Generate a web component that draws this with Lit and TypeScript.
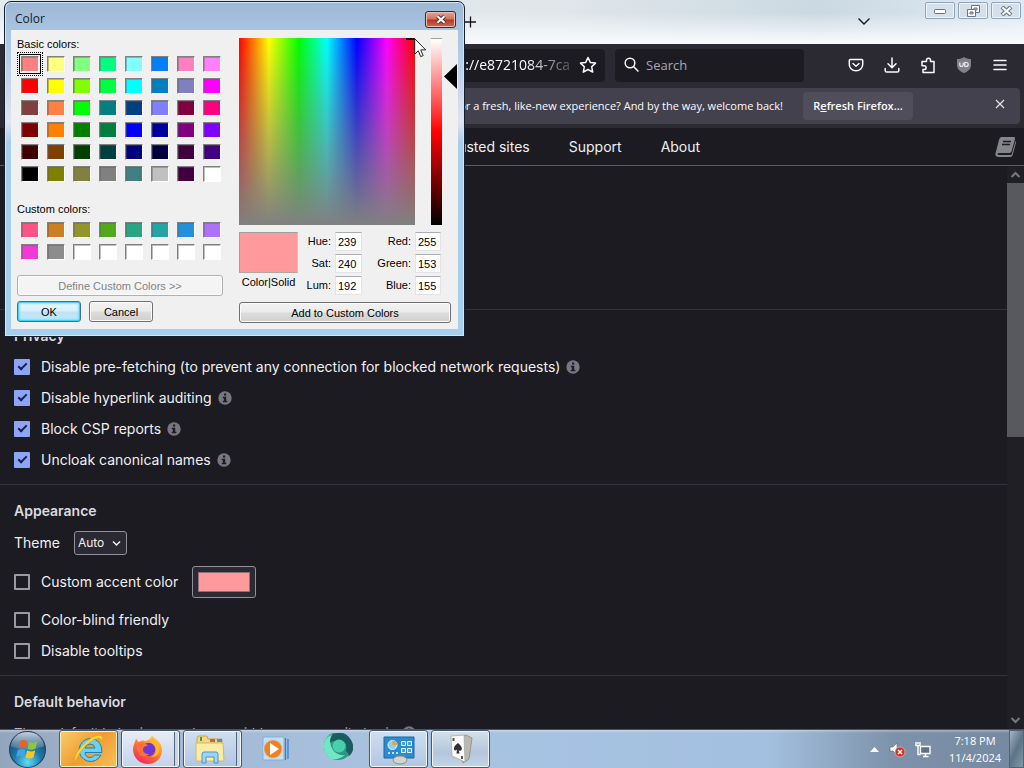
import { LitElement, html, css, svg } from "lit";
import { customElement } from "lit/decorators.js";
import { styleMap } from "lit/directives/style-map.js";

const BASIC = [
  "#ff8080", "#ffff80", "#80ff80", "#00ff80", "#80ffff", "#0080ff", "#ff80c0", "#ff80ff",
  "#ff0000", "#ffff00", "#80ff00", "#00ff40", "#00ffff", "#0080c0", "#8080c0", "#ff00ff",
  "#804040", "#ff8040", "#00ff00", "#008080", "#004080", "#8080ff", "#800040", "#ff0080",
  "#800000", "#ff8000", "#008000", "#008040", "#0000ff", "#0000a0", "#800080", "#8000ff",
  "#400000", "#804000", "#004000", "#004040", "#000080", "#000040", "#400040", "#400080",
  "#000000", "#808000", "#808040", "#808080", "#408080", "#c0c0c0", "#400040", "#ffffff",
];
const CUSTOM = [
  "#fc5484", "#cc7f22", "#94942c", "#54a81c", "#2ca484", "#24a4a4", "#2490dc", "#ac74f4",
  "#f438d4", "#8c8c8c", "#ffffff", "#ffffff", "#ffffff", "#ffffff", "#ffffff", "#ffffff",
];

@customElement("color-dialog")
export class ColorDialog extends LitElement {
  static styles = css`
    :host { display: block; font: 11px/14px "Liberation Sans", Arial, sans-serif; color: #000; }
    * { box-sizing: border-box; }
    button, input { font: inherit; color: inherit; margin: 0; padding: 0; }
    .frame {
      border: 1px solid #15202c; border-radius: 7px 7px 0 0; padding: 0 6px 7px;
      background: linear-gradient(#9db8d4 0, #a9c6e4 34px, #c3d5ec 80px, #dfe4f4 120px, #a9cdeb 140px, #a6d0ee);
      box-shadow: inset 0 0 0 1px #d3e6f7;
    }
    .title { display: flex; align-items: center; justify-content: space-between; height: 28px; padding: 6px 2px 0 4px; }
    .title span { font: 12px/16px "Open Sans", "Noto Sans", sans-serif; color: #111c2c; }
    .close {
      display: grid; place-items: center; width: 31px; height: 17px; border: 1px solid #5a1a1a; border-radius: 3px;
      background: linear-gradient(#e0a59a, #cf7160 48%, #b5371f 52%, #d0695a); box-shadow: inset 0 0 0 1px #edc0b6;
    }
    .body { display: flex; gap: 16px; background: #f0f0f0; padding: 7px 0 6px 6px; }
    .left { display: flex; flex-direction: column; width: 206px; }
    .right { flex: 1; display: flex; flex-direction: column; padding-top: 1px; }
    .swatches { display: grid; grid-template-columns: repeat(8, 18px); gap: 6px 8px; padding: 5px 4px 0; }
    .sw {
      height: 16px; border: 1px solid; border-color: #808080 #fff #fff #808080; box-shadow: inset 1px 1px 0 #5c5c5c66;
    }
    .sw.on { outline: 1px solid #000; outline-offset: 1px; position: relative; }
    .sw.on::after { content: ""; position: absolute; inset: -5px; border: 1px dotted #000; }
    .custom { margin-top: 20px; }
    .custom + .swatches { padding-top: 6px; }
    .btn {
      height: 21px; border: 1px solid #707070; border-radius: 3px; line-height: 14px;
      background: linear-gradient(#f2f2f2, #ebebeb 48%, #dddddd 52%, #cfcfcf); box-shadow: inset 0 0 0 1px #fcfcfc;
    }
    .btn:disabled { border-color: #adb2b5; background: #f4f4f4; color: #838383; }
    .ok { border-color: #2c7a9c; box-shadow: inset 0 0 0 1px #45d0f3, inset 0 0 3px 1px #45d0f3; background: linear-gradient(#eef7fc, #d9effb 48%, #bfe3f5 52%, #c6e8f8); }
    .define { margin-top: 15px; }
    .pair { display: flex; gap: 8px; margin-top: 5px; }
    .pair .btn { width: 64px; }
    .pick { display: flex; }
    .spectrum {
      width: 176px; height: 187px; position: relative;
      background: linear-gradient(#80808000, #808080), linear-gradient(to right, #f00, #ff0 17%, #0f0 34%, #0ff 50%, #00f 67%, #f0f 84%, #f00);
    }
    .spectrum::after { content: ""; position: absolute; right: 0; top: 0; width: 8px; height: 9px; border-top: 2px solid #000; border-right: 1px solid #000; }
    .lum { width: 11px; margin-left: 16px; background: linear-gradient(#fff, #f00 50%, #000); border-top: 1px solid #a0a0a0; }
    .tri { margin: 26px 0 0 2px; align-self: flex-start; }
    .vals { display: flex; padding: 7px 0; }
    .preview { width: 59px; text-align: center; white-space: nowrap; }
    .chip { height: 41px; background: #ff999b; border: 1px solid; border-color: #a0a0a0 #f4b4b4 #b4a4a4 #a0a0a0; margin-bottom: 2px; }
    .nums { display: grid; grid-template-columns: 33px 27px 45px 26px; gap: 3px 4px; }
    .nums label { text-align: right; line-height: 19px; }
    .nums input { width: 100%; height: 19px; border: 1px solid #e3e3e3; border-top-color: #abadb3; background: #fff; padding: 0 0 0 2px; outline: 0; }
    .add { width: 212px; }
  `;
  swatch = (c: string, i: number, on: boolean) => html`<button class="sw ${on ? "on" : ""}" aria-label=${`Color ${i + 1}`} style=${styleMap({ backgroundColor: c })}></button>`;
  num = (id: string, v: string) => html`<label for=${id}>${id}:</label><input id=${id} .value=${v} />`;
  render() {
    return html`<div class="frame" role="dialog" aria-label="Color">
      <div class="title"><span>Color</span>
        <button class="close" aria-label="Close"><svg width="12" height="9" viewBox="0 0 12 9"><path d="M2.5 1.3l7 6.4M9.5 1.3l-7 6.4" stroke="#5b2720" stroke-width="4"/><path d="M2.5 1.3l7 6.4M9.5 1.3l-7 6.4" stroke="#fff" stroke-width="2.2"/></svg></button>
      </div>
      <div class="body">
        <div class="left">
          <div>Basic colors:</div>
          <div class="swatches">${BASIC.map((c, i) => this.swatch(c, i, i === 0))}</div>
          <div class="custom">Custom colors:</div>
          <div class="swatches">${CUSTOM.map((c, i) => this.swatch(c, i, false))}</div>
          <button class="btn define" disabled>Define Custom Colors &gt;&gt;</button>
          <div class="pair"><button class="btn ok">OK</button><button class="btn">Cancel</button></div>
        </div>
        <div class="right">
          <div class="pick"><div class="spectrum"></div><div class="lum"></div>
            <svg class="tri" width="13" height="25" viewBox="0 0 13 25"><path d="M0 12.5L13 0v25z"/></svg></div>
          <div class="vals">
            <div class="preview"><div class="chip"></div>Color|Solid</div>
            <div class="nums">
              ${this.num("Hue", "239")}${this.num("Red", "255")}${this.num("Sat", "240")}${this.num("Green", "153")}${this.num("Lum", "192")}${this.num("Blue", "155")}
            </div>
          </div>
          <button class="btn add">Add to Custom Colors</button>
        </div>
      </div>
    </div>`;
  }
}

@customElement("browser-chrome")
export class BrowserChrome extends LitElement {
  static styles = css`
    :host { display: block; font: 12px/16px "Open Sans", "Noto Sans", sans-serif; color: #fbfbfe; background: #2b2a33; }
    * { box-sizing: border-box; }
    button { font: inherit; color: inherit; margin: 0; padding: 0; border: 0; background: none; }
    svg { display: block; fill: none; }
    .tabs {
      display: flex; align-items: flex-start; height: 44px; color: #15141a; padding: 0 3px 0 461px;
      background: linear-gradient(#ffffff00 30%, #f7fafc 95%), linear-gradient(to right, #e4ecf0, #e0e6ea 55%, #cbd9e2 80%, #dfeaf4);
    }
    .plus { padding: 16px 4px; }
    .chev { margin: 17px 54px 0 auto; }
    .win { display: flex; gap: 3px; padding-top: 2px; }
    .win button { width: 30px; height: 17px; border: 1px solid #93a4b8; border-radius: 2px; display: grid; place-items: center; background: #d5e0ea; box-shadow: inset 0 0 0 1px #eef3f8; }
    .tools { display: flex; align-items: center; height: 42px; padding: 0 16px 0 124px; }
    .url, .search { display: flex; align-items: center; height: 33px; background: #1c1b22; border-radius: 4px; }
    .url { flex: 1; padding-right: 8px; margin-right: 10px; gap: 8px; }
    .ident { padding: 0 8px; width: 237px; text-align: right; font-size: 13px; white-space: nowrap; }
    input { font: 14px/20px "Open Sans", "Noto Sans", sans-serif; color: #fbfbfe; border: 0; padding: 0; background: none; min-width: 0; outline: 0; }
    .url input { flex: 1; -webkit-mask-image: linear-gradient(to right, #000 78%, #0003); }
    .search { width: 189px; padding: 0 9px; gap: 6px; margin-right: 44px; }
    .search input { flex: 1; font-size: 13px; }
    .search input::placeholder { color: #a9a8b1; opacity: 1; }
    .icons { display: flex; gap: 20px; }
    .notice { display: flex; align-items: center; margin: 2px 4px 4px; height: 36px; border-radius: 4px; background: #42414d; padding-right: 15px; }
    .msg { flex: 1; text-align: right; white-space: nowrap; overflow: hidden; font-size: 11px; padding-right: 20px; }
    .refresh { width: 110px; height: 28px; background: #4f4e5a; border-radius: 4px; font-size: 11px; font-weight: 600; }
    .x { margin-left: 82px; padding-bottom: 4px; }
  `;
  render() {
    return html`
      <div class="tabs">
        <button class="plus" aria-label="New tab"><svg width="12" height="12" stroke="#15141a" stroke-width="1.3"><path d="M0 6h11M5.5 .5v11"/></svg></button>
        <button class="chev" aria-label="List all tabs"><svg width="14" height="10" stroke="#15141a" stroke-width="1.4"><path d="M1.5 1.5L7 7l5.5-5.5"/></svg></button>
        <div class="win">
          <button aria-label="Minimize"><svg width="12" height="8"><rect x=".5" y="2.5" width="11" height="4" rx="1" fill="#fff" stroke="#66758a"/></svg></button>
          <button aria-label="Restore"><svg width="13" height="12" stroke="#66758a"><path fill="#fff" fill-rule="evenodd" d="M4.5 .5h8v7h-8zM7 3h3v2H7z"/><path fill="#fff" fill-rule="evenodd" d="M.5 4.5h8v7h-8zM3 7h3v2H3z"/></svg></button>
          <button aria-label="Close"><svg width="13" height="10"><path d="M2 1l9 8M11 1L2 9" stroke="#66758a" stroke-width="4.2"/><path d="M2.5 1.5l8 7M10.5 1.5l-8 7" stroke="#fff" stroke-width="2.2"/></svg></button>
        </div>
      </div>
      <div class="tools">
        <div class="url">
          <span class="ident">Extension</span>
          <input aria-label="Address" .value=${"moz-extension://e8721084-7cac-4"} />
          <button aria-label="Bookmark"><svg width="18" height="18" stroke="#fbfbfe" stroke-width="1.5" stroke-linejoin="round"><path d="M9 1.500l2.300 4.900 5.200.700-3.800 3.700 1 5.300L9 13.500l-4.700 2.600 1-5.300L1.500 7.100l5.200-.700z"/></svg></button>
        </div>
        <div class="search">
          <svg width="16" height="16" stroke="#fbfbfe" stroke-width="1.5"><circle cx="6" cy="6" r="4.8"/><path d="M9.5 9.5l5 5"/></svg>
          <input aria-label="Search" placeholder="Search" />
        </div>
        <div class="icons">
          <button aria-label="Pocket"><svg width="16" height="16" stroke="#fbfbfe" stroke-width="1.5" stroke-linecap="round" stroke-linejoin="round"><path d="M2.300 2.500h11.400q1 0 1 1v4a6.700 6.300 0 0 1-13.400 0v-4q0-1 1-1z"/><path d="M5 6.500l3 2.800 3-2.800"/></svg></button>
          <button aria-label="Downloads"><svg width="16" height="16" stroke="#fbfbfe" stroke-width="1.5" stroke-linecap="round" stroke-linejoin="round"><path d="M8 1v9.500M4 6.800l4 4 4-4M1.200 11.500v2q0 1.500 1.500 1.500h10.600q1.500 0 1.500-1.500v-2"/></svg></button>
          <button aria-label="Extensions"><svg width="16" height="17" stroke="#fbfbfe" stroke-width="1.5" stroke-linejoin="round"><path d="M2 7V4.500h4.500V3.300a2 2 0 0 1 4 0v1.200H14V15.500H3V12.500h1.200a1.800 1.800 0 0 0 0-3.700H2z"/></svg></button>
          <button aria-label="uBlock Origin"><svg width="16" height="16"><path d="M8 0C6 1.500 3.500 2 1 2v6c0 4 3 6.500 7 8 4-1.500 7-4 7-8V2C12.500 2 10 1.500 8 0z" fill="#808088"/><path d="M3.800 5.500v2.300a1.700 1.700 0 0 0 3.400 0V5.500" stroke="#eee" stroke-width="1.2"/><path d="M8.800 5.500h1.400q2 0 2 2t-2 2H8.800z" stroke="#eee" stroke-width="1.2"/></svg></button>
          <button aria-label="Menu"><svg width="16" height="16" stroke="#fbfbfe" stroke-width="1.5" stroke-linecap="round"><path d="M2 3.500h12M2 8h12M2 12.500h12"/></svg></button>
        </div>
      </div>
      <div class="notice">
        <span class="msg">Do you want to clean it up for a fresh, like-new experience? And by the way, welcome back!</span>
        <button class="refresh">R<u>e</u>fresh Firefox...</button>
        <button class="x" aria-label="Dismiss"><svg width="10" height="10" stroke="#e4e4ea" stroke-width="1.2"><path d="M1 1l8 8M9 1L1 9"/></svg></button>
      </div>`;
  }
}

@customElement("settings-page")
export class SettingsPage extends LitElement {
  static styles = css`
    :host { display: flex; flex-direction: column; min-height: 0; font: 14px/20px Inter, sans-serif; color: #f0f0f4; background: #1b1b21; }
    * { box-sizing: border-box; }
    svg { display: block; }
    nav { display: flex; align-items: center; height: 38px; border-bottom: 1px solid #5b5b66; padding: 0 8px 0 34px; flex: none; }
    nav a { color: inherit; text-decoration: none; padding: 0 20px 0 19px; white-space: nowrap; }
    nav .book { margin-left: auto; padding: 0; }
    .view { flex: 1; display: flex; min-height: 0; }
    main { flex: 1; overflow: hidden; }
    section { padding: 10px 14px 9px; border-bottom: 1px solid #33333b; }
    h2 { font-size: 14px; font-weight: 600; line-height: 31px; margin: 0; color: #dadae0; }
    .row { display: flex; align-items: center; height: 31px; }
    .row label { padding-left: 11px; white-space: nowrap; }
    .row.theme { height: 34px; }
    .theme label { padding: 0 14px 0 0; }
    .row.accent { height: 44px; }
    input[type="checkbox"] { appearance: none; width: 16px; height: 16px; margin: 0; border: 2px solid #9a9aa2; border-radius: 1px; flex: none; display: grid; place-items: center; }
    input[type="checkbox"]:checked { background: #8ea4f4; border-color: #8ea4f4; }
    input[type="checkbox"]:checked::before { content: ""; width: 9px; height: 5px; box-sizing: border-box; border: solid #15204c; border-width: 0 0 2px 2px; transform: translateY(-1px) rotate(-45deg); }
    .info { margin-left: 6px; }
    .pickbox { display: grid; }
    select { appearance: none; grid-area: 1 / 1; font: 12px/20px Inter, sans-serif; color: #f0f0f4; background: #2b2a33; border: 1px solid #8f8f9d; border-radius: 3px; width: 53px; height: 24px; padding: 0 3px; }
    .pickbox svg { grid-area: 1 / 1; place-self: center end; margin-right: 6px; pointer-events: none; }
    input[type="color"] { appearance: none; width: 64px; height: 32px; margin-left: 14px; border: 1px solid #8f8f9d; border-radius: 3px; background: #2b2a33; padding: 5px; }
    input[type="color"]::-webkit-color-swatch-wrapper { padding: 0; }
    input[type="color"]::-webkit-color-swatch { border: 1px solid #8f7078; border-radius: 0; }
    .note { color: #b8b8c0; font-size: 13px; }
    .scroll { width: 17px; display: flex; flex-direction: column; align-items: center; background: #1f1f25; padding: 5px 0; }
    .thumb { width: 100%; height: 46%; margin: 5px 0 auto; background: #58585f; }
  `;
  info = () => html`<svg class="info" width="14" height="14" viewBox="0 0 14 14"><circle cx="7" cy="7" r="6.7" fill="#77777f"/><path fill="#1b1b21" d="M6 2.500h2.200v2H6zM4.800 5.700h3.400v4h1.100v1.500H4.800V9.700h1.100V7.200H4.800z"/></svg>`;
  check = (id: string, text: string, on: boolean, info = false) => html`<div class="row"><input type="checkbox" id=${id} .checked=${on} /><label for=${id}>${text}</label>${info ? this.info() : ""}</div>`;
  render() {
    return html`
      <nav>
        ${["Settings", "Filter lists", "My filters", "My rules", "Trusted sites", "Support", "About"].map((t) => html`<a href="#">${t}</a>`)}
        <a class="book" href="#" aria-label="Documentation"><svg width="21" height="20" viewBox="0 0 21 20"><path fill="#85858c" d="M6.500 0h12q2 0 1.500 2l-3.300 12q-.5 2-2.500 2H4q-1.500 0-1.500 1t1.500 1h11.500q1 0 1.500-1.500L20.500 4q.8.8.3 2.300L17.800 17.500Q17.200 20 15 20H3.500Q0 20 .5 16.500L4 3Q4.700 0 6.500 0z"/><path d="M8 4.500h8M7 7.500h8" stroke="#1b1b21" stroke-width="1.4"/></svg></a>
      </nav>
      <div class="view">
        <main>
          <section>
            ${this.check("icon", "Show the number of blocked requests on the icon", true)}
            ${this.check("menu", "Make use of context menu where appropriate", true)}
            ${this.check("cloud", "Enable cloud storage support", false)}
            ${this.check("adv", "I am an advanced user", false)}
          </section>
          <section>
            <h2>Privacy</h2>
            ${this.check("pre", "Disable pre-fetching (to prevent any connection for blocked network requests)", true, true)}
            ${this.check("aud", "Disable hyperlink auditing", true, true)}
            ${this.check("csp", "Block CSP reports", true, true)}
            ${this.check("names", "Uncloak canonical names", true, true)}
          </section>
          <section>
            <h2>Appearance</h2>
            <div class="row theme"><label for="theme">Theme</label>
              <span class="pickbox"><select id="theme"><option>Auto</option><option>Light</option><option>Dark</option></select>
                <svg width="9" height="7" fill="none" stroke="#f0f0f4" stroke-width="1.5"><path d="M1 1.500l3.500 3.500L8 1.500"/></svg></span></div>
            <div class="row accent"><input type="checkbox" id="accent" /><label for="accent">Custom accent color</label><input type="color" aria-label="Accent color" value="#ff999b" /></div>
            ${this.check("blind", "Color-blind friendly", false)}
            ${this.check("tips", "Disable tooltips", false)}
          </section>
          <section>
            <h2>Default behavior</h2>
            <div class="row note">These default behaviors can be overridden on a per-site basis${this.info()}</div>
          </section>
        </main>
        <div class="scroll">
          <svg width="11" height="7" fill="none" stroke="#77777f" stroke-width="2"><path d="M1.500 6l4-4 4 4"/></svg>
          <div class="thumb"></div>
          <svg width="11" height="7" fill="none" stroke="#77777f" stroke-width="2"><path d="M1.500 1l4 4 4-4"/></svg>
        </div>
      </div>`;
  }
}

const orb = svg`<defs><radialGradient id="o" cx=".5" cy=".85" r=".85"><stop offset="0" stop-color="#5fe0f8"/><stop offset=".45" stop-color="#1f78a8"/><stop offset="1" stop-color="#1b3c66"/></radialGradient><linearGradient id="g" x2="0" y2="1"><stop stop-color="#fff" stop-opacity=".75"/><stop offset="1" stop-color="#fff" stop-opacity=".1"/></linearGradient></defs>
  <circle cx="18" cy="18" r="17.5" fill="url(#o)" stroke="#24405c"/><path d="M2 15a16 14 0 0 1 32 0q-16 6-32 0z" fill="url(#g)"/>
  <path fill="#e8622c" d="M10.500 10q4-2.500 7.500 0l-1.500 7q-3.500-2-7.500 0z"/><path fill="#8cc63f" d="M19.500 10.500q4 2 8-.5l-1.800 7.200q-3.700 2-7.700.3z"/><path fill="#3fa4e8" d="M8.500 18.500q4-2.200 7.600 0l-1.600 7q-3.500-2.500-7.500-.5z"/><path fill="#fcc820" d="M17.700 19q4 2 7.800-.2l-1.700 7q-4 2.200-7.800-.2z"/>`;
const ie = svg`<path d="M17 5.500A11.500 11.500 0 1 0 28 22h-6.500q-1.500 2.500-4.500 2.500-4.500 0-5-5h17Q29 6 17 5.500zm-5 9.500q1-4 5-4t5 4z" fill="#6cd0f6" stroke="#1b82b8"/><path d="M4 30Q-2 25 9 13T28 2.500q3 2-1 8 2-6-2-5.500Q16 7.500 8.500 17.500T4 30z" fill="#fcd93c" stroke="#e0a318" stroke-width=".6"/>`;
const fox = svg`<defs><linearGradient id="f" x1=".9" y1="0" x2=".3" y2="1"><stop stop-color="#ffe040"/><stop offset=".45" stop-color="#ff8c28"/><stop offset="1" stop-color="#f0285c"/></linearGradient></defs><path d="M20 2c1 4 10 5 10 15 0 8-6 14-14 14S1 25 1 16.500C1 12 3 10 4 5.500c1 2 2 3 3 3.500 3-2 5-1.500 7-1 2-1 5-2 6-6z" fill="url(#f)"/><circle cx="16.5" cy="16.5" r="6.8" fill="#7038d0"/><path d="M6 10c4-2 8 0 10 3-3-.5-5 1-5 3.500 0 3 3 5 6 4.500-3 3.500-9 3-11-1.500S5 13 6 10z" fill="#ff7139"/><path d="M18 9c4 1 6 4 6 8s-3 6-5 7c6 0 9-4 8-10S21 7 18 9z" fill="#ffb52e"/>`;
const folder = svg`<path d="M3 5l1-2h9l1 3h14v21H3z" fill="#f0d884" stroke="#c8a544"/><path d="M6 4h2v4H6z" fill="#4c9c3c"/><path d="M16 6h5v3h-5z" fill="#c86444"/><path d="M23 6h5v3h-5z" fill="#548cc8"/><path d="M2 10h27l1 18H2z" fill="#fbeca8" stroke="#d8b85c"/><path d="M8 30v-9q0-2 2-2h12q2 0 2 2v9h-4v-6h-8v6z" fill="#9cd4f4" stroke="#4c94c8"/>`;
const media = svg`<path d="M4 4h21v23H4z" fill="#c4e0f4" stroke="#7cb0dc"/><path d="M26.500 5v22M29 6v20" stroke="#3c84c8" stroke-width="1.3"/><circle cx="14" cy="16" r="9.5" fill="#f08020" stroke="#c8d4e0" stroke-width="1.5"/><path d="M11 10l9 6-9 6z" fill="#fff"/>`;
const edge = svg`<circle cx="17" cy="13" r="14" fill="#2c9884"/><path d="M4 19Q0 6 11 1.500 7 10 12 17q4 6 12 5Q11 32 4 19z" fill="#70e8c4"/><path d="M12 1q12-4 18 6t-3 17q2-3-2-6 2-10-6-10-8-1-10 2 0-6 3-9z" fill="#1c5c5c"/><circle cx="18" cy="13" r="6.5" fill="#48d0ac"/>`;
const panel = svg`<path d="M1 4h30v21H1z" fill="#2c8cd0" stroke="#1868a8"/><circle cx="9.5" cy="12" r="4.5" fill="#8cd0f4" stroke="#e8f4fc"/><path d="M9.500 12V7.500a4.500 4.500 0 0 1 4.500 4.500z" fill="#f0a030"/><path d="M18.500 8.500h4v4h-4zM24.500 8.500h4v4h-4zM18.500 15.500h4v4h-4zM24.500 15.500h4v4h-4z" fill="#48a4e0" stroke="#e8f4fc"/><path d="M5 20h10" stroke="#bce0f8" stroke-width="2" stroke-dasharray="2"/><ellipse cx="17" cy="27" rx="7" ry="4" fill="#d4d4cc" stroke="#8c8c84"/>`;
const cards = svg`<path d="M10 4l11-2 6 3-3 21-6 4z" fill="#b8b8b4" stroke="#84847c" stroke-width=".7"/><path d="M6 3l13-1 1 27-13-6z" fill="#fafaf8" stroke="#a4a49c" stroke-width=".7"/><path d="M13 10q6 5 3 7.500-2 1-2.500-1l1 4h-3l.5-4q-2 2-3 0-1-3 4-6.500z" fill="#303030"/><path d="M7.500 5h2v3h-2zM16 23h2v3h-2z" fill="#555"/>`;

@customElement("task-bar")
export class TaskBar extends LitElement {
  static styles = css`
    :host {
      display: flex; align-items: stretch; height: 39px; font: 11px/17px "Open Sans", "Noto Sans", sans-serif; color: #fff; padding-left: 6px;
      background: linear-gradient(#ffffff55, #ffffff00 3px), linear-gradient(to right, #94a6be, #a3b6cf 12%, #a8c3e2 40%, #a4c0e0 75%, #7e93ab 87%, #74899f);
      border-top: 1px solid #40566e; box-sizing: border-box;
    }
    * { box-sizing: border-box; }
    button { padding: 0; margin: 0; border: 0; background: none; display: grid; place-items: center; }
    svg { display: block; }
    .start { width: 42px; margin-right: 11px; }
    .apps { display: flex; gap: 3px; }
    .app { width: 59px; border-radius: 3px; }
    .open { border: 1px solid #44586e; box-shadow: inset 0 0 0 1px #f0f6fc; background: linear-gradient(#d4e0ec, #b4c6dc 60%, #c4d4e6); }
    .hot { background: linear-gradient(135deg, #f8d068, #f09c34 50%, #f8c058); box-shadow: inset 0 0 0 1px #fdf0c0; }
    .light { background: linear-gradient(#e8ecf6, #c4d2ea); }
    .pale { background: linear-gradient(#d0dff0, #b0c6e2); }
    .many { padding-right: 6px; box-shadow: inset 0 0 0 1px #f0f6fc, inset -4px 0 0 #c8d6e6, inset -5px 0 0 #54687e; }
    .tray { margin-left: auto; display: flex; align-items: center; gap: 9px; }
    .clock { width: 68px; text-align: center; white-space: nowrap; }
    .desk { width: 15px; border: 1px solid #50647a; background: linear-gradient(115deg, #a4b4c4, #5c7488 50%, #8498a8); }
  `;
  app = (name: string, art: unknown, cls = "") => html`<button class="app ${cls}" aria-label=${name}><svg width="32" height="32" viewBox="0 0 32 32" fill="none">${art}</svg></button>`;
  render() {
    return html`
      <button class="start" aria-label="Start"><svg width="37" height="37" viewBox="0 0 36 36">${orb}</svg></button>
      <div class="apps">
        ${this.app("Internet Explorer", ie, "open hot")}${this.app("Firefox", fox, "open light many")}${this.app("Explorer", folder, "open pale many")}${this.app("Media Player", media)}${this.app("Edge", edge)}${this.app("Control Panel", panel, "open pale")}${this.app("Solitaire", cards, "open")}
      </div>
      <div class="tray">
        <svg width="9" height="5"><path d="M4.500 0L9 5H0z" fill="#fff"/></svg>
        <svg width="18" height="17" viewBox="0 0 18 17"><path d="M2 6h3l4-4v12l-4-4H2z" fill="#fff" stroke="#56687c" stroke-width=".6"/><circle cx="12" cy="11" r="5" fill="#d03428" stroke="#f4c8c0" stroke-width=".6"/><path d="M10 9l4 4M14 9l-4 4" stroke="#fff" stroke-width="1.5"/></svg>
        <svg width="17" height="17" viewBox="0 0 17 17" fill="none" stroke="#fff" stroke-width="1.4"><path fill="#5c7088" d="M5.500 5.500h9.500v7H5.500z"/><path d="M8 15.500h5.500M10.500 12.500v3M1 1v3.500h4V1M3 1v2M3 4.500v9h2.500"/></svg>
        <div class="clock">7:18 PM<br />11/4/2024</div>
      </div>
      <button class="desk" aria-label="Show desktop"></button>`;
  }
}

@customElement("app-root")
export class AppRoot extends LitElement {
  static styles = css`
    :host { display: block; }
    .desktop { position: relative; display: flex; flex-direction: column; height: 100vh; overflow: hidden; background: #1b1b21; }
    .page { flex: 1; min-height: 0; }
    .dialog { position: absolute; left: 4px; top: 1px; width: 461px; z-index: 2; }
    .cursor { position: absolute; left: 414px; top: 38px; z-index: 3; }
  `;
  render() {
    return html`<div class="desktop">
      <browser-chrome></browser-chrome>
      <settings-page class="page"></settings-page>
      <task-bar></task-bar>
      <color-dialog class="dialog"></color-dialog>
      <svg class="cursor" width="13" height="20" viewBox="0 0 13 20"><path d="M.7.7v15.500l3.600-3.400 2.400 5.800 2.500-1-2.500-5.700h5z" fill="#fff" stroke="#222" stroke-width="1"/></svg>
    </div>`;
  }
}
